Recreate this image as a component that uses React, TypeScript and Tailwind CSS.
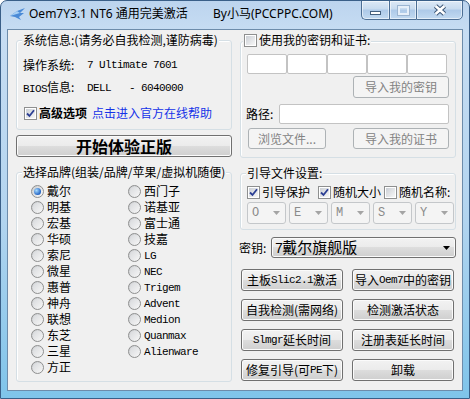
import React from "react";

function Mono({ children, className }: { children: React.ReactNode; className?: string }) {
  return (
    <span className={`font-['Liberation_Mono',monospace] whitespace-pre ${className ?? "text-[11px] tracking-[-0.6px]"}`}>
      {children}
    </span>
  );
}

function Check({ checked }: { checked?: boolean }) {
  return (
    <span className="w-[13px] h-[13px] border border-[#8e8f8f] bg-white p-[1px] shrink-0 flex">
      <span className="flex-1 bg-[linear-gradient(135deg,#cbcfd5,#f7f7f7)] flex items-center justify-center">
        {checked && (
          <svg width="9" height="9" viewBox="0 0 9 9">
            <path d="M1 4.5 L3.5 7 L8 1.2" fill="none" stroke="#2c3f94" strokeWidth="1.8" />
          </svg>
        )}
      </span>
    </span>
  );
}

function Radio({ checked }: { checked?: boolean }) {
  return (
    <span className="w-[13px] h-[13px] rounded-full border border-[#8e8f8f] bg-[linear-gradient(135deg,#c9cbce,#fbfbfb)] flex items-center justify-center shrink-0">
      {checked ? (
        <span className="w-[7px] h-[7px] rounded-full bg-[radial-gradient(circle_at_35%_35%,#a8dcff,#1a5cc0_75%)]" />
      ) : (
        <span className="w-[9px] h-[9px] rounded-full bg-[linear-gradient(135deg,#d8dadd,#f4f4f4)]" />
      )}
    </span>
  );
}

function Group({
  label,
  className,
  labelClass,
  children,
}: {
  label: React.ReactNode;
  className?: string;
  labelClass?: string;
  children: React.ReactNode;
}) {
  return (
    <div className={`relative border border-[#d5dfe5] rounded-[3px] shadow-[inset_1px_1px_0_#ffffff] ${className ?? ""}`}>
      <div className={`absolute bg-[#f0f0f0] px-[1px] leading-[16px] h-[16px] flex items-center whitespace-nowrap ${labelClass ?? "left-[5px] -top-[9px]"}`}>
        {label}
      </div>
      {children}
    </div>
  );
}

function Btn({
  children,
  disabled,
  className,
}: {
  children: React.ReactNode;
  disabled?: boolean;
  className?: string;
}) {
  const base = "flex items-center justify-center rounded-[3px] border text-[12px] leading-[16px] whitespace-nowrap shrink-0";
  const style = disabled
    ? "border-[#adb2b5] bg-[#f4f4f4] text-[#838383]"
    : "border-[#707070] bg-[linear-gradient(#f2f2f2_0%,#ebebeb_50%,#dddddd_50%,#cfcfcf_100%)] text-black shadow-[inset_0_0_0_1px_#fbfbfb]";
  return <div className={`${base} ${style} ${className ?? ""}`}>{children}</div>;
}

function DCombo({ v }: { v: string }) {
  return (
    <div className="w-[39px] h-[22px] border border-[#c4c7ca] rounded-[3px] bg-[#f4f4f4] flex items-center pl-[4px] text-[#8a8a8a]">
      <Mono className="text-[12px] tracking-[-0.5px]">{v}</Mono>
      <svg className="ml-auto mr-[5px]" width="7" height="4" viewBox="0 0 7 4">
        <path d="M0 0 L7 0 L3.5 4 Z" fill="#a4a4a4" />
      </svg>
    </div>
  );
}

const col1 = ["戴尔", "明基", "宏基", "华硕", "索尼", "微星", "惠普", "神舟", "联想", "东芝", "三星", "方正"];
const col2: { t: string; mono?: boolean }[] = [
  { t: "西门子" },
  { t: "诺基亚" },
  { t: "富士通" },
  { t: "技嘉" },
  { t: "LG", mono: true },
  { t: "NEC", mono: true },
  { t: "Trigem", mono: true },
  { t: "Advent", mono: true },
  { t: "Medion", mono: true },
  { t: "Quanmax", mono: true },
  { t: "Alienware", mono: true },
];

export default function App() {
  return (
    <div className="w-[470px] h-[399px] overflow-hidden rounded-t-[7px] border border-[#3a5f88] bg-[linear-gradient(180deg,#bcd4ee_0%,#c7ddf3_8%,#b2d4ef_55%,#7fc4ea_100%)] font-['Noto_Sans_CJK_SC',sans-serif] text-[12px] text-black">
      {/* title bar */}
      <div className="h-[28px] flex items-start">
        <div className="flex items-center h-[26px] pl-[9px]">
          <svg width="16" height="12" viewBox="0 0 16 12">
            <path d="M0 8 L7 3 L15 0 L10 5 L14 5 L9 9 L11 12 L5 9 Z" fill="#4a8ad6" />
            <path d="M0 8 L7 3 L10 5 Z" fill="#a6cff4" />
          </svg>
          <span className="ml-[3px] w-[184px] font-['Noto_Sans','Noto_Sans_CJK_SC',sans-serif] text-[12px] leading-[16px]">
            Oem7Y3.1 NT6 通用完美激活
          </span>
          <span className="font-['Noto_Sans','Noto_Sans_CJK_SC',sans-serif] text-[12px] leading-[16px]">
            By小马(PCCPPC.COM)
          </span>
        </div>
        <div className="ml-auto mr-[6px] -mt-[1px] flex h-[20px]">
          <div className="w-[28px] h-full border border-[#4c6e94] border-r-0 rounded-bl-[5px] bg-[linear-gradient(180deg,#dde9f6_0%,#c8dbef_45%,#adc9e8_50%,#c2daf1_100%)] shadow-[inset_0_0_0_1px_rgba(255,255,255,0.55)] flex items-center justify-center">
            <span className="w-[11px] h-[4px] bg-white border border-[#44607f] mt-[5px]" />
          </div>
          <div className="w-[27px] h-full border border-[#4c6e94] border-r-0 bg-[linear-gradient(180deg,#dde9f6_0%,#c8dbef_45%,#adc9e8_50%,#c2daf1_100%)] shadow-[inset_0_0_0_1px_rgba(255,255,255,0.55)] flex items-center justify-center">
            <span className="w-[11px] h-[9px] border-[2px] border-[#e6eff9] outline outline-1 outline-[#9cb5d1]" />
          </div>
          <div className="w-[47px] h-full border border-[#4c6e94] rounded-br-[5px] bg-[linear-gradient(180deg,#dde9f6_0%,#c8dbef_45%,#adc9e8_50%,#c2daf1_100%)] shadow-[inset_0_0_0_1px_rgba(255,255,255,0.55)] flex items-center justify-center">
            <svg width="14" height="12" viewBox="0 0 14 12">
              <path d="M2.5 2 L11.5 10 M11.5 2 L2.5 10" stroke="#3b5676" strokeWidth="4.6" />
              <path d="M2.5 2 L11.5 10 M11.5 2 L2.5 10" stroke="#ffffff" strokeWidth="2.6" />
            </svg>
          </div>
        </div>
      </div>

      {/* client area */}
      <div className="ml-[6px] w-[456px] h-[362px] border border-[#6d8cab] bg-[#f0f0f0] flex items-start">
        {/* left column */}
        <div className="ml-[8px] w-[216px] flex flex-col">
          <Group label="系统信息:(请务必自我检测,谨防病毒)" className="mt-[10px] h-[90px] pt-[16px] pl-[6px]">
            <div className="h-[16px] leading-[16px] flex items-center">
              <span className="w-[64px]">操作系统:</span>
              <Mono>7 Ultimate 7601</Mono>
            </div>
            <div className="h-[16px] leading-[16px] flex items-center mt-[7px]">
              <span className="w-[64px]">
                <Mono>BIOS</Mono>信息:
              </span>
              <Mono>DELL   - 6040000</Mono>
            </div>
            <div className="h-[16px] leading-[16px] flex items-center mt-[9px] ml-[1px]">
              <Check checked />
              <span className="ml-[2px] font-bold">高级选项</span>
              <span className="ml-[5px] text-[#1533e8]">点击进入官方在线帮助</span>
            </div>
          </Group>

          <Btn className="mt-[5px] h-[22px] w-[216px] text-[16px] font-bold">开始体验正版</Btn>

          <Group label="选择品牌(组装/品牌/苹果/虚拟机随便)" className="mt-[15px] h-[210px] pt-[10px] pl-[14px]">
            <div className="flex">
              <div className="w-[97px] flex flex-col">
                {col1.map((t, i) => (
                  <div key={t} className="h-[16px] flex items-center">
                    <Radio checked={i === 0} />
                    <span className="ml-[3px] leading-[16px]">{t}</span>
                  </div>
                ))}
              </div>
              <div className="flex flex-col">
                {col2.map((c) => (
                  <div key={c.t} className="h-[16px] flex items-center">
                    <Radio />
                    <span className="ml-[3px] leading-[16px]">{c.mono ? <Mono>{c.t}</Mono> : c.t}</span>
                  </div>
                ))}
              </div>
            </div>
          </Group>
        </div>

        {/* right column */}
        <div className="ml-[8px] w-[216px] flex flex-col">
          <Group
            label={
              <>
                <Check />
                <span className="ml-[2px]">使用我的密钥和证书:</span>
              </>
            }
            labelClass="left-[2px] -top-[10px]"
            className="mt-[11px] h-[117px] pt-[12px] pl-[6px]"
          >
            <div className="flex">
              {[0, 1, 2, 3, 4].map((i) => (
                <div key={i} className="w-[40px] h-[20px] bg-white border border-[#c3c3c3] rounded-[2px]" />
              ))}
            </div>
            <div className="flex justify-end pr-[6px] mt-[2px]">
              <Btn disabled className="w-[96px] h-[22px]">导入我的密钥</Btn>
            </div>
            <div className="flex items-center mt-[6px] -ml-[1px]">
              <span className="w-[33px] leading-[16px]">路径:</span>
              <div className="w-[170px] h-[20px] bg-white border border-[#c3c3c3] rounded-[2px]" />
            </div>
            <div className="flex mt-[4px]">
              <Btn disabled className="ml-[1px] w-[78px] h-[21px]">浏览文件...</Btn>
              <Btn disabled className="ml-auto mr-[6px] w-[96px] h-[21px]">导入我的证书</Btn>
            </div>
          </Group>

          <Group label="引导文件设置:" className="mt-[15px] h-[57px] pt-[10px] pl-[6px]">
            <div className="h-[16px] flex items-center">
              <div className="w-[71px] flex items-center">
                <Check checked />
                <span className="ml-[2px]">引导保护</span>
              </div>
              <div className="w-[66px] flex items-center">
                <Check checked />
                <span className="ml-[2px]">随机大小</span>
              </div>
              <div className="flex items-center">
                <Check />
                <span className="ml-[2px]">随机名称:</span>
              </div>
            </div>
            <div className="flex gap-[3px] mt-[2px]">
              {["O", "E", "M", "S", "Y"].map((v) => (
                <DCombo key={v} v={v} />
              ))}
            </div>
          </Group>

          <div className="mt-[7px] flex items-center -ml-[1px]">
            <span className="w-[32px] leading-[16px]">密钥:</span>
            <div className="w-[186px] h-[21px] border border-[#707070] rounded-[3px] bg-[linear-gradient(#f2f2f2_0%,#ebebeb_50%,#dddddd_50%,#cfcfcf_100%)] shadow-[inset_0_0_0_1px_#fbfbfb] flex items-center pl-[3px]">
              <span className="text-[15px] leading-[18px]">
                <Mono className="text-[14px] tracking-[-1px]">7</Mono>戴尔旗舰版
              </span>
              <svg className="ml-auto mr-[5px]" width="7" height="4" viewBox="0 0 7 4">
                <path d="M0 0 L7 0 L3.5 4 Z" fill="#000" />
              </svg>
            </div>
          </div>

          <div className="mt-[11px] ml-[1px] grid grid-cols-[102px_102px] gap-x-[9px] gap-y-[8px]">
            <Btn className="h-[22px]">
              主板<Mono>Slic2.1</Mono>激活
            </Btn>
            <Btn className="h-[22px]">
              导入<Mono>Oem7</Mono>中的密钥
            </Btn>
            <Btn className="h-[22px]">自我检测(需网络)</Btn>
            <Btn className="h-[22px]">检测激活状态</Btn>
            <Btn className="h-[22px]">
              <Mono>Slmgr</Mono>延长时间
            </Btn>
            <Btn className="h-[22px]">注册表延长时间</Btn>
            <Btn className="h-[22px]">
              修复引导(可<Mono>PE</Mono>下)
            </Btn>
            <Btn className="h-[22px]">卸载</Btn>
          </div>
        </div>
      </div>
    </div>
  );
}
